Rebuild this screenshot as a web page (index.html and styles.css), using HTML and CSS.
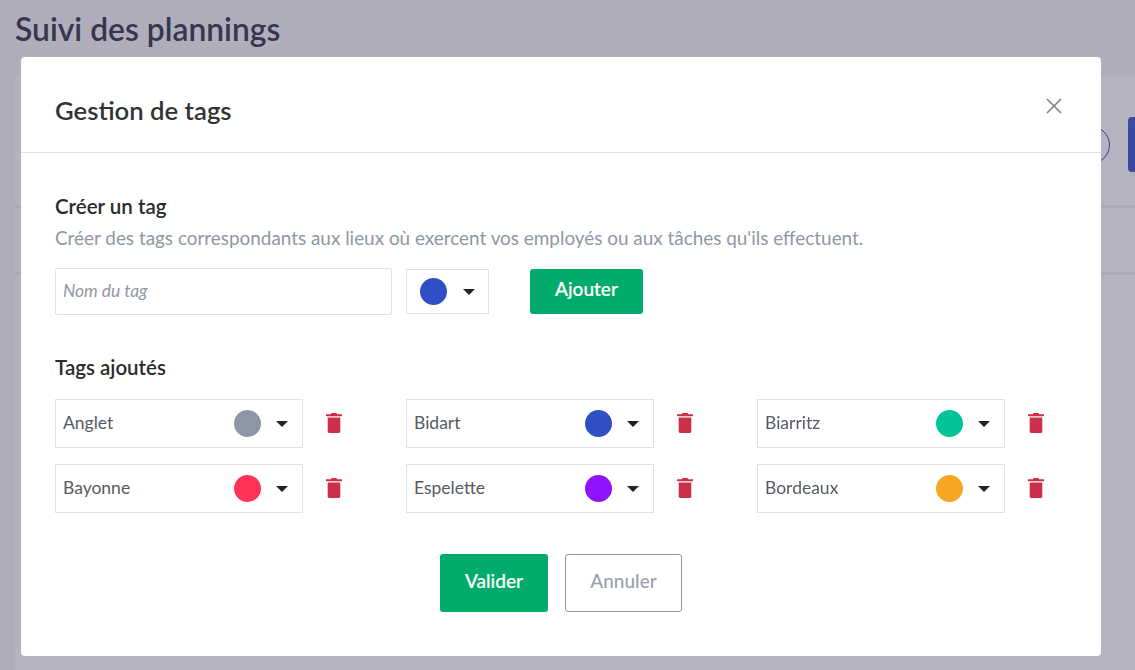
FILE: index.html
```html
<!DOCTYPE html>
<html lang="fr">
<head>
<meta charset="utf-8">
<title>Suivi des plannings</title>
<link rel="stylesheet" href="styles.css">
</head>
<body>
<svg class="defs" width="0" height="0"><symbol id="trash" viewBox="0 0 16 20"><path d="M5.500 0h5l.7 1.200H16v2.100H0V1.200h4.800zM1.700 4.600h12.600v14c0 .8-.6 1.400-1.400 1.400H3.100c-.8 0-1.400-.6-1.400-1.400z"/></symbol></svg>
<div class="page">
  <h1 class="page-title">Suivi des plannings</h1>
  <div class="bg-card">
    <div class="bg-toolbar"><span class="bg-round"></span><span class="bg-btn"></span></div>
    <div class="bg-row"></div>
  </div>
</div>
<div class="backdrop"></div>
<div class="modal">
  <header class="modal-head">
    <h2 class="modal-title">Gestion de tags</h2>
    <svg class="close" width="18" height="18" viewBox="0 0 18 18"><path d="M2 2l14 14M16 2L2 16" stroke="#7f8184" stroke-width="1.6" fill="none"/></svg>
  </header>
  <div class="modal-body">
    <h3 class="section-title">Créer un tag</h3>
    <p class="hint">Créer des tags correspondants aux lieux où exercent vos employés ou aux tâches qu'ils effectuent.</p>
    <div class="create-row">
      <div class="name-input">Nom du tag</div>
      <div class="picker">
        <span class="dot c-blue"></span><span class="caret"></span>
      </div>
      <button class="btn btn-add">Ajouter</button>
    </div>
    <h3 class="section-title added">Tags ajoutés</h3>
    <div class="tags">
      <div class="tag"><div class="tag-field"><span class="tag-name">Anglet</span><span class="dot c-grey"></span><span class="caret"></span></div><svg class="trash"><use href="#trash"/></svg></div>
      <div class="tag"><div class="tag-field"><span class="tag-name">Bidart</span><span class="dot c-blue"></span><span class="caret"></span></div><svg class="trash"><use href="#trash"/></svg></div>
      <div class="tag"><div class="tag-field"><span class="tag-name">Biarritz</span><span class="dot c-green"></span><span class="caret"></span></div><svg class="trash"><use href="#trash"/></svg></div>
      <div class="tag"><div class="tag-field"><span class="tag-name">Bayonne</span><span class="dot c-red"></span><span class="caret"></span></div><svg class="trash"><use href="#trash"/></svg></div>
      <div class="tag"><div class="tag-field"><span class="tag-name">Espelette</span><span class="dot c-purple"></span><span class="caret"></span></div><svg class="trash"><use href="#trash"/></svg></div>
      <div class="tag"><div class="tag-field"><span class="tag-name">Bordeaux</span><span class="dot c-orange"></span><span class="caret"></span></div><svg class="trash"><use href="#trash"/></svg></div>
    </div>
    <div class="actions">
      <button class="btn btn-ok">Valider</button>
      <button class="btn btn-cancel">Annuler</button>
    </div>
  </div>
</div>
</body>
</html>
```
FILE: styles.css
```css
* { box-sizing: border-box; }
html, body { margin: 0; height: 100%; overflow: hidden; }
body { background: #f7f7fc; font-family: Lato, "Open Sans", sans-serif; color: #333; }
.defs { display: block; height: 0; }
.page { padding-left: 15px; height: 670px; overflow: hidden; }
.page-title { margin: 0; padding-top: 10px; height: 76px; font-size: 31.8px; line-height: 38px; font-weight: 600; color: #404050; }
.bg-card { background: #fff; height: 700px; border-radius: 4px 0 0 0; }
.bg-toolbar { height: 132px; border-bottom: 3px solid #f0f0f5; display: flex; justify-content: flex-end; align-items: center; gap: 18px; overflow: hidden; padding-top: 8px; }
.bg-round { width: 38px; height: 38px; border-radius: 50%; border: 1px solid #3b4fc0; flex: none; }
.bg-btn { width: 47px; height: 55px; background: #425ecf; border-radius: 4px; margin-right: -40px; flex: none; }
.bg-row { height: 67px; border-bottom: 3px solid #f0f0f5; }
.backdrop { position: fixed; inset: 0; background: rgba(42, 38, 72, .35); }
.modal { position: fixed; left: 21px; top: 57px; width: 1080px; height: 599px; background: #fff; border-radius: 4px; }
.modal-head { height: 96px; border-bottom: 1px solid #dfe1e6; display: flex; justify-content: space-between; align-items: flex-start; padding: 0 38px 0 34px; }
.modal-title { margin: 37px 0 0; font-size: 25.7px; line-height: 32px; font-weight: 600; color: #333; }
.close { margin-top: 40px; width: 18px; height: 18px; }
.modal-body { padding: 40px 34px 0; }
.section-title { margin: 0; font-size: 20.5px; line-height: 26px; font-weight: 600; color: #2b2b2b; }
.hint { margin: 7px 0 0; font-size: 18.9px; line-height: 24px; color: #8e97a6; }
.create-row { display: flex; align-items: flex-start; margin-top: 18px; }
.name-input { width: 337px; height: 47px; border: 1px solid #dfe1e6; border-radius: 2px; padding: 0 7px; font-size: 17.4px; line-height: 44px; font-style: italic; color: #8e97a6; }
.picker { width: 83px; height: 45px; margin: 1px 0 0 14px; border: 1px solid #dfe1e6; display: flex; align-items: center; padding-left: 13px; }
.picker .caret { margin-left: 16px; }
.dot { width: 27px; height: 27px; border-radius: 50%; flex: none; }
.caret { width: 0; height: 0; border-style: solid; border-width: 6px 6px 0; border-color: #222 transparent transparent; flex: none; }
.c-blue { background: #2f50c4; }
.c-grey { background: #8c96a5; }
.c-green { background: #00c495; }
.c-red { background: #ff3355; }
.c-purple { background: #9013fe; }
.c-orange { background: #f5a623; }
.btn { font-family: inherit; border-radius: 3px; border: 0; font-size: 19px; font-weight: 500; cursor: pointer; }
.btn-add { width: 113px; height: 45px; margin: 1px 0 0 41px; background: #00ab6b; color: #fff; padding: 0 0 6px; -webkit-text-stroke: .2px #fff; }
.added { margin-top: 39px; }
.tags { display: grid; grid-template-columns: repeat(3, 351px); row-gap: 16px; margin-top: 19px; }
.tag { display: flex; align-items: center; }
.tag-field { width: 248px; height: 49px; border: 1px solid #dfe1e6; display: flex; align-items: center; padding: 0 14px 0 7px; }
.tag-name { flex: 1; font-size: 17.5px; color: #555b63; padding-bottom: 2px; }
.tag-field .caret { margin-left: 15px; }
.trash { width: 16px; height: 20px; margin: 0 0 2px 23px; fill: #cc3048; }
.actions { display: flex; justify-content: center; gap: 17px; margin-top: 41px; }
.btn-ok { width: 108px; height: 58px; background: #00ab6b; color: #fff; padding: 0 0 6px; -webkit-text-stroke: .2px #fff; }
.btn-cancel { width: 117px; height: 58px; background: #fff; border: 1px solid #8e97a6; color: #99a1af; padding: 0 0 6px; }
```
